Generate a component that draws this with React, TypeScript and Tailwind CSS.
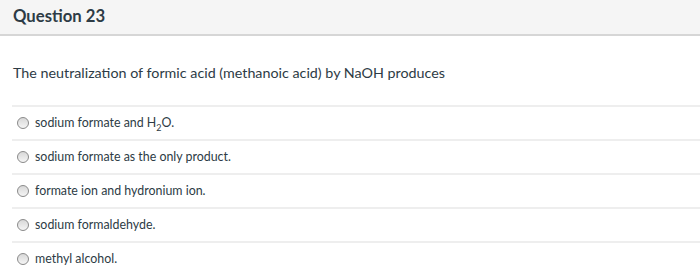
import React from "react";

const options: React.ReactNode[] = [
  <>sodium formate and H<sub className="text-[9px] align-[-2px]">2</sub>O.</>,
  <>sodium formate as the only product.</>,
  <>formate ion and hydronium ion.</>,
  <>sodium formaldehyde.</>,
  <>methyl alcohol.</>,
];

export default function App() {
  return (
    <div className="w-[700px] h-[279px] bg-white overflow-hidden text-[#2d3b45]" style={{ fontFamily: "Lato, 'Open Sans', sans-serif" }}>
      <div className="h-[36px] bg-[#f5f5f5] border-b-2 border-[#d6d6d6] flex items-center pl-[13px]">
        <span className="text-[16.7px] font-bold text-[#2d3b45]">Question 23</span>
      </div>
      <div className="pl-[13px] pt-[27px] pb-[22px] text-[14.3px] leading-[20px]">
        The neutralization of formic acid (methanoic acid) by NaOH produces
      </div>
      <div className="ml-[12px]">
        {options.map((o, i) => (
          <div key={i} className="h-[34px] border-t-2 border-[#eeeeee] flex items-center pl-[5px]">
            <span className="w-[12px] h-[12px] rounded-full border border-[#8a8a8a] bg-gradient-to-b from-[#d8d8d8] to-[#f5f5f5] mr-[6px] shrink-0" />
            <span className="text-[12.4px] leading-[16px]">{o}</span>
          </div>
        ))}
      </div>
    </div>
  );
}
